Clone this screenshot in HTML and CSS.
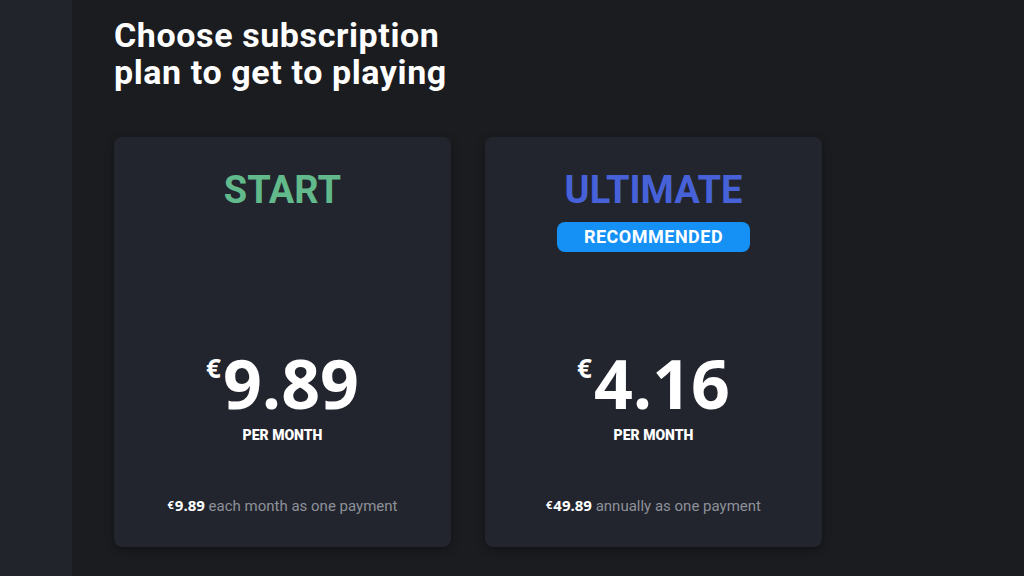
FILE: index.html
```html
<!DOCTYPE html>
<html lang="en">
  <head>
    <meta charset="UTF-8" />
    <meta name="viewport" content="width=device-width, initial-scale=1.0" />
    <title>Subscription plans</title>
    <link rel="stylesheet" href="styles.css">
  </head>
  <body>
    <aside class="sidebar"></aside>
    <main class="content">
      <h1>Choose subscription<br>plan to get to playing</h1>
      <div class="plan-grid">
        <div class="plan-card">
          <div class="plan-head">
            <h2 class="plan-name start">START</h2>
          </div>
          <div class="price">
            <span class="currency">€</span><span class="amount">9.89</span>
          </div>
          <div class="period">PER MONTH</div>
          <p class="billing"><b><span class="cur-small">€</span>9.89</b> each month as one payment</p>
        </div>
        <div class="plan-card">
          <div class="plan-head">
            <h2 class="plan-name ultimate">ULTIMATE</h2>
            <span class="badge">RECOMMENDED</span>
          </div>
          <div class="price">
            <span class="currency">€</span><span class="amount">4.16</span>
          </div>
          <div class="period">PER MONTH</div>
          <p class="billing"><b><span class="cur-small">€</span>49.89</b> annually as one payment</p>
        </div>
      </div>
    </main>
  </body>
</html>
```

FILE: styles.css
```css
body {
  margin: 0;
  padding: 0;
  height: 576px;
  overflow: hidden;
  display: flex;
  background-color: #1b1c20;
  font-family: Roboto, Arial, sans-serif;
  color: #ffffff;
}

.sidebar {
  width: 72px;
  flex-shrink: 0;
  background-color: #21242b;
}

.content {
  flex: 1;
  padding: 17px 0 0 42px;
}

h1 {
  margin: 0;
  font-size: 34px;
  line-height: 37px;
  font-weight: 700;
  letter-spacing: 0.6px;
  color: #ffffff;
}

.plan-grid {
  display: flex;
  gap: 34px;
  margin-top: 46px;
}

.plan-card {
  width: 337px;
  height: 410px;
  box-sizing: border-box;
  padding: 30px 20px 31px;
  background-color: #22252d;
  border-radius: 8px;
  box-shadow: 0 3px 8px rgba(0, 0, 0, 0.35);
  display: flex;
  flex-direction: column;
  align-items: center;
}

.plan-head {
  height: 120px;
  display: flex;
  flex-direction: column;
  align-items: center;
}

.plan-name {
  margin: 0;
  font-size: 38px;
  line-height: 46px;
  font-weight: 700;
}

.plan-name.start {
  color: #62b98b;
}

.plan-name.ultimate {
  color: #4762d8;
}

.badge {
  margin-top: 9px;
  width: 193px;
  height: 30px;
  line-height: 30px;
  text-align: center;
  background-color: #1590f5;
  border-radius: 8px;
  font-size: 18px;
  font-weight: 700;
  letter-spacing: 0.5px;
  color: #ffffff;
}

.price {
  margin-top: 61px;
  display: flex;
  align-items: flex-start;
  font-family: "Open Sans", "Noto Sans", sans-serif;
  line-height: 70px;
}

.currency {
  font-size: 26px;
  line-height: 40px;
  font-weight: 700;
  margin-right: 2px;
}

.amount {
  font-size: 68px;
  font-weight: 700;
}

.period {
  margin-top: 9px;
  font-size: 14px;
  line-height: 16px;
  font-weight: 900;
}

.billing {
  margin: auto 0 0;
  font-size: 15px;
  line-height: 20px;
  color: #8e919a;
}

.billing b {
  font-family: "Open Sans", "Noto Sans", sans-serif;
  font-weight: 700;
  color: #ffffff;
}

.cur-small {
  font-size: 11px;
  vertical-align: 2px;
  margin-right: 1px;
}
```
